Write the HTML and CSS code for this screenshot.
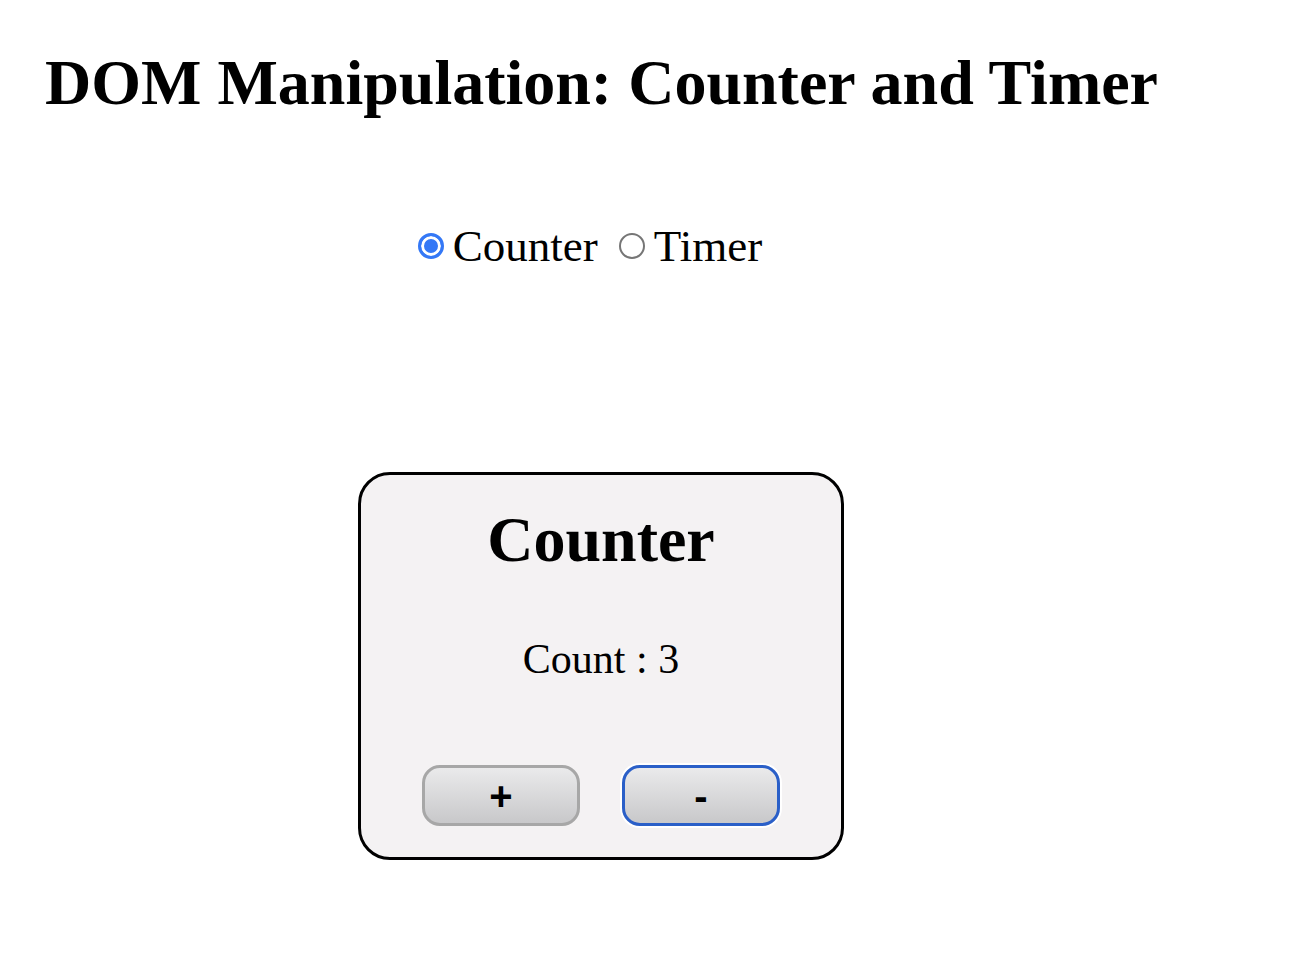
FILE: index.html
```html
<!DOCTYPE html>
<html lang="en">
<head>
<meta charset="utf-8">
<title>DOM Manipulation: Counter and Timer</title>
<link rel="stylesheet" href="styles.css">
</head>
<body>
<h1 class="title">DOM Manipulation: Counter and Timer</h1>
<main class="stage">
  <div class="modes">
    <label class="mode"><input class="radio" type="radio" name="mode" checked><span>Counter</span></label>
    <label class="mode"><input class="radio" type="radio" name="mode"><span>Timer</span></label>
  </div>
  <section class="card">
    <h2 class="card-title">Counter</h2>
    <p class="count">Count : 3</p>
    <div class="buttons">
      <button class="btn" type="button">+</button>
      <button class="btn btn-focus" type="button">-</button>
    </div>
  </section>
</main>
</body>
</html>
```

FILE: styles.css
```css
html, body {
  margin: 0;
  padding: 0;
  background: #ffffff;
  color: #000000;
  font-family: "Liberation Serif", "Times New Roman", serif;
}

.title {
  margin: 46px 0 0 45px;
  font-size: 64px;
  line-height: 1.15;
  font-weight: bold;
  white-space: nowrap;
}

.stage {
  width: 1202px;
  display: flex;
  flex-direction: column;
  align-items: center;
}

.modes {
  margin-top: 101px;
  margin-right: 22px;
  height: 50px;
  display: flex;
  align-items: center;
  gap: 21px;
}

.mode {
  display: flex;
  align-items: center;
  gap: 9px;
  font-size: 45px;
  line-height: 50px;
}

.radio {
  appearance: none;
  -webkit-appearance: none;
  margin: 0;
  width: 26px;
  height: 26px;
  border-radius: 50%;
  box-sizing: border-box;
  border: 2px solid #767676;
  background: #ffffff;
  flex: none;
}

.radio:checked {
  border: 3px solid #3478f6;
  background: #3478f6;
  box-shadow: inset 0 0 0 3px #ffffff;
}

.card {
  margin-top: 201px;
  width: 486px;
  box-sizing: border-box;
  border: 3px solid #000000;
  border-radius: 32px;
  background: #f4f2f3;
  padding: 28px 0 31px;
  display: flex;
  flex-direction: column;
  align-items: center;
}

.card-title {
  margin: 0;
  font-size: 64px;
  line-height: 1.15;
  font-weight: bold;
}

.count {
  margin: 59px 0 0;
  font-size: 42px;
  line-height: 48px;
}

.buttons {
  margin-top: 82px;
  display: flex;
  gap: 42px;
}

.btn {
  width: 158px;
  height: 61px;
  box-sizing: border-box;
  border: 3px solid #a7a7a7;
  border-radius: 18px;
  background: linear-gradient(#eaeaeb, #c8c8ca);
  font-family: "Liberation Sans", Arial, sans-serif;
  font-weight: bold;
  font-size: 40px;
  line-height: 1;
  color: #000000;
  padding: 0;
  display: flex;
  align-items: center;
  justify-content: center;
}

.btn-focus {
  border-color: #2a5fc8;
  box-shadow: 0 0 0 2px #ffffff;
}
```
